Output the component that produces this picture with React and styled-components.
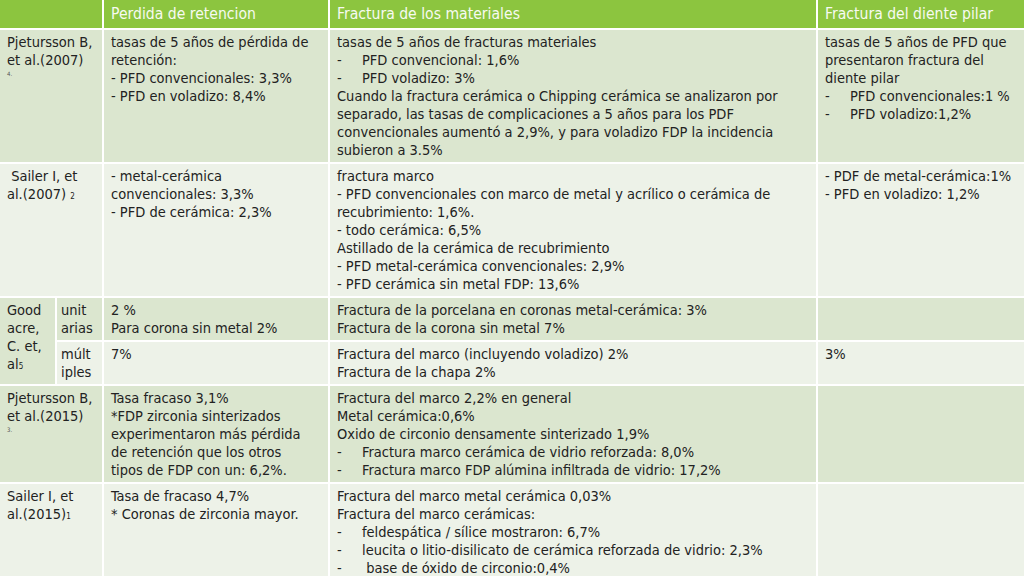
import React from 'react';
import styled, { createGlobalStyle } from 'styled-components';

const Global = createGlobalStyle`
  html, body {
    margin: 0;
    padding: 0;
    background: #ffffff;
    overflow: hidden;
  }
`;

export default function App() {
    return (
        <>
        <Global />
        <Table>
            <colgroup>
                <col style={{ width: 57 }} />
                <col style={{ width: 47 }} />
                <col style={{ width: 226 }} />
                <col style={{ width: 488 }} />
                <col style={{ width: 206 }} />
            </colgroup>
            <thead>
                <tr>
                    <HeadCell colSpan={2}></HeadCell>
                    <HeadCell>Perdida de retencion</HeadCell>
                    <HeadCell>Fractura de los materiales</HeadCell>
                    <HeadCell $last>Fractura del diente pilar</HeadCell>
                </tr>
            </thead>
            <tbody>
                <tr>
                    <Cell colSpan={2} $tone="dark">
                        Pjetursson B,<br />
                        et al.(2007)
                        <Note>4.</Note>
                    </Cell>
                    <Cell $tone="dark">
                        tasas de 5 años de pérdida de<br />
                        retención:<br />
                        - PFD convencionales: 3,3%<br />
                        - PFD en voladizo: 8,4%
                    </Cell>
                    <Cell $tone="dark">
                        tasas de 5 años de fracturas materiales
                        <Item>PFD convencional: 1,6%</Item>
                        <Item>PFD voladizo: 3%</Item>
                        Cuando la fractura cerámica o Chipping cerámica se analizaron por<br />
                        separado, las tasas de complicaciones a 5 años para los PDF<br />
                        convencionales aumentó a 2,9%, y para voladizo FDP la incidencia<br />
                        subieron a 3.5%
                    </Cell>
                    <Cell $tone="dark" $last>
                        tasas de 5 años de PFD que<br />
                        presentaron fractura del<br />
                        diente pilar
                        <Item>PFD convencionales:1 %</Item>
                        <Item>PFD voladizo:1,2%</Item>
                    </Cell>
                </tr>
                <tr>
                    <Cell colSpan={2} $tone="light">
                        &nbsp;Sailer I, et<br />
                        al.(2007) <Sub>2</Sub>
                    </Cell>
                    <Cell $tone="light">
                        - metal-cerámica<br />
                        convencionales: 3,3%<br />
                        - PFD de cerámica: 2,3%
                    </Cell>
                    <Cell $tone="light">
                        fractura marco<br />
                        - PFD convencionales con marco de metal y acrílico o cerámica de<br />
                        recubrimiento: 1,6%.<br />
                        - todo cerámica: 6,5%<br />
                        Astillado de la cerámica de recubrimiento<br />
                        - PFD metal-cerámica convencionales: 2,9%<br />
                        - PFD cerámica sin metal FDP: 13,6%
                    </Cell>
                    <Cell $tone="light" $last>
                        - PDF de metal-cerámica:1%<br />
                        - PFD en voladizo: 1,2%
                    </Cell>
                </tr>
                <tr>
                    <Cell rowSpan={2} $tone="dark">
                        Good<br />
                        acre,<br />
                        C. et,<br />
                        al<Sub>5</Sub>
                    </Cell>
                    <Cell $tone="dark" $tight>unit<br />arias</Cell>
                    <Cell $tone="dark">
                        2 %<br />
                        Para corona sin metal 2%
                    </Cell>
                    <Cell $tone="dark">
                        Fractura de la porcelana en coronas metal-cerámica: 3%<br />
                        Fractura de la corona sin metal 7%
                    </Cell>
                    <Cell $tone="dark" $last></Cell>
                </tr>
                <tr>
                    <Cell $tone="light" $tight>múlt<br />iples</Cell>
                    <Cell $tone="light">7%</Cell>
                    <Cell $tone="light">
                        Fractura del marco (incluyendo voladizo) 2%<br />
                        Fractura de la chapa 2%
                    </Cell>
                    <Cell $tone="light" $last>3%</Cell>
                </tr>
                <tr>
                    <Cell colSpan={2} $tone="dark">
                        Pjetursson B,<br />
                        et al.(2015)
                        <Note>3.</Note>
                    </Cell>
                    <Cell $tone="dark">
                        Tasa fracaso 3,1%<br />
                        *FDP zirconia sinterizados<br />
                        experimentaron más pérdida<br />
                        de retención que los otros<br />
                        tipos de FDP con un: 6,2%.
                    </Cell>
                    <Cell $tone="dark">
                        Fractura del marco 2,2% en general<br />
                        Metal cerámica:0,6%<br />
                        Oxido de circonio densamente sinterizado 1,9%
                        <Item>Fractura marco cerámica de vidrio reforzada: 8,0%</Item>
                        <Item>Fractura marco FDP alúmina infiltrada de vidrio: 17,2%</Item>
                    </Cell>
                    <Cell $tone="dark" $last></Cell>
                </tr>
                <tr>
                    <Cell colSpan={2} $tone="light">
                        Sailer I, et<br />
                        al.(2015)<Sub>1</Sub>
                    </Cell>
                    <Cell $tone="light">
                        Tasa de fracaso 4,7%<br />
                        * Coronas de zirconia mayor.
                    </Cell>
                    <Cell $tone="light">
                        Fractura del marco metal cerámica 0,03%<br />
                        Fractura del marco cerámicas:
                        <Item>feldespática / sílice mostraron: 6,7%</Item>
                        <Item>leucita o litio-disilicato de cerámica reforzada de vidrio: 2,3%</Item>
                        <Item>&nbsp;base de óxido de circonio:0,4%</Item>
                    </Cell>
                    <Cell $tone="light" $last></Cell>
                </tr>
            </tbody>
        </Table>
        </>
    );
}

function Item({ children }) {
    return (
        <ItemRow>
            <Dash>-</Dash>
            <span>{children}</span>
        </ItemRow>
    );
}

const Table = styled.table`
    width: 1024px;
    table-layout: fixed;
    border-collapse: separate;
    border-spacing: 0;
    font-family: "DejaVu Sans Condensed", "DejaVu Sans", sans-serif;
    font-stretch: condensed;
    font-size: 14.5px;
    line-height: 18px;
    color: #222222;
`;

const HeadCell = styled.th`
    background: #8cc53f;
    color: #f7faf1;
    font-weight: normal;
    font-size: 15.6px;
    text-align: left;
    padding: 5px 7px 5px;
    height: 18px;
    white-space: nowrap;
    border-right: ${p => (p.$last ? '0' : '2px solid #ffffff')};
    border-bottom: 2px solid #ffffff;
`;

const Cell = styled.td`
    background: ${p => (p.$tone === 'dark' ? '#dbe6cf' : '#edf2e8')};
    vertical-align: top;
    padding: ${p => (p.$tight ? '3px 2px 3px 4px' : '3px 7px 3px')};
    white-space: nowrap;
    border-right: ${p => (p.$last ? '0' : '2px solid #ffffff')};
    border-bottom: 2px solid #ffffff;
`;

const ItemRow = styled.div`
    display: flex;
`;

const Dash = styled.span`
    flex: 0 0 25px;
`;

const Note = styled.div`
    font-size: 6px;
    line-height: 9px;
    color: #555555;
`;

const Sub = styled.span`
    font-size: 8px;
    line-height: 0;
`;
